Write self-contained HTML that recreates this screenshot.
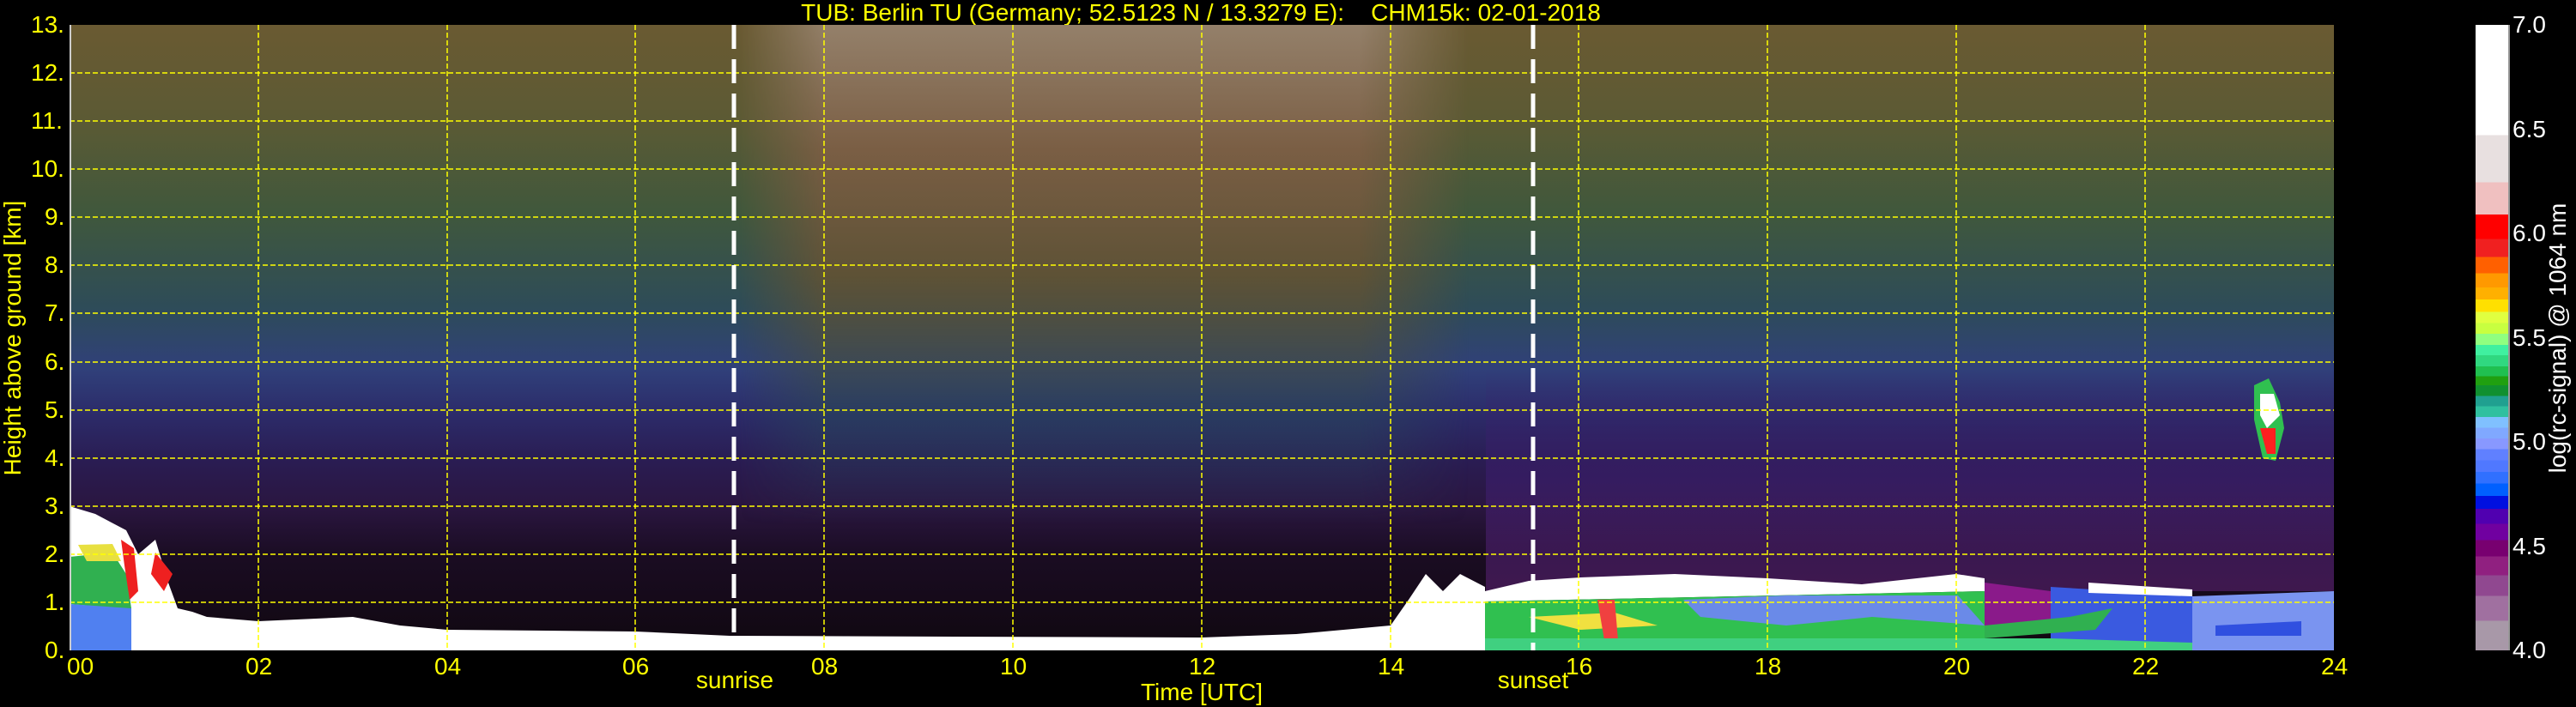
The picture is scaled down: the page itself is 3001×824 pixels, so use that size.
<!DOCTYPE html>
<html><head><meta charset="utf-8"><style>
html,body{margin:0;padding:0;background:#000;width:3001px;height:824px;overflow:hidden;position:relative;font-family:"Liberation Sans","DejaVu Sans",sans-serif;}
.t{position:absolute;color:#ffff00;font-size:28px;white-space:nowrap;line-height:1;}
.w{color:#fff;}
#plot{position:absolute;left:81px;top:29px;width:2638px;height:729px;overflow:hidden;
background:linear-gradient(to bottom,#6a5a32 0%,#5c5a34 15%,#40583c 30%,#2e4c58 45%,#30407a 55%,#2c2c6a 62%,#2a1c52 70%,#2a1640 77%,#1a0c22 85%,#100810 100%);}
#day{position:absolute;left:780px;top:0;width:850px;height:729px;
background:linear-gradient(to bottom,#94806a 0%,#7a5e44 20%,#5e5236 40%,rgba(40,70,90,0.6) 62%,rgba(0,0,0,0) 80%);
-webkit-mask-image:linear-gradient(to right,transparent 0%,#000 12%,#000 85%,transparent 100%);}
#eve{position:absolute;left:1650px;top:400px;width:988px;height:260px;
background:linear-gradient(to bottom,rgba(50,40,120,0) 0%,rgba(60,30,110,0.6) 50%,rgba(80,30,100,0.7) 100%);}
#cb{position:absolute;left:2884px;top:29px;width:38px;height:729px;border-right:2px solid #999;
background:linear-gradient(to bottom,#fff 0%,#fff 17.6%,#e8e0e0 17.6%,#e8e0e0 25.2%,#f0c0c0 25.2%,#f0c0c0 30.3%,#ff0000 30.3%,#ff0000 34.2%,#f02020 34.2%,#f02020 37.1%,#ff6000 37.1%,#ff6000 39.7%,#ff9900 39.7%,#ff9900 42%,#ffb000 42%,#ffb000 43.9%,#ffe000 43.9%,#ffe000 45.9%,#e0ff40 45.9%,#e0ff40 47.7%,#c8ff40 47.7%,#c8ff40 49.4%,#90ff80 49.4%,#90ff80 51.2%,#40f0a0 51.2%,#40f0a0 52.8%,#30d880 52.8%,#30d880 54.6%,#20c050 54.6%,#20c050 56.2%,#20a010 56.2%,#20a010 57.6%,#109030 57.6%,#109030 59.3%,#20a090 59.3%,#20a090 61%,#30c0a0 61%,#30c0a0 62.7%,#80c0ff 62.7%,#80c0ff 64.4%,#80a8ff 64.4%,#80a8ff 66.1%,#8898ff 66.1%,#8898ff 67.8%,#6080ff 67.8%,#6080ff 69.6%,#5078ff 69.6%,#5078ff 71.5%,#3070ff 71.5%,#3070ff 73.3%,#0060ff 73.3%,#0060ff 75.3%,#0010e0 75.3%,#0010e0 77.4%,#5000b0 77.4%,#5000b0 79.8%,#7000a0 79.8%,#7000a0 82.4%,#780070 82.4%,#780070 85%,#902080 85%,#902080 88%,#904890 88%,#904890 91.3%,#a070a0 91.3%,#a070a0 95.3%,#a898a8 95.3%,#a898a8 100%);}
</style></head><body>
<div class="t" style="left:0;width:2798px;text-align:center;top:1px;">TUB: Berlin TU (Germany; 52.5123 N / 13.3279 E):&nbsp;&nbsp;&nbsp; CHM15k: 02-01-2018</div>

<div id="plot">
<div id="day"></div>
<div id="eve"></div>
<svg width="2638" height="729" style="position:absolute;left:0;top:0">
<polygon fill="#fff" points="0,561 30,570 66,589 80,617 100,600 115,650 126,680 143,684 160,690 220,695 330,690 385,700 440,705 659,707 769,712 1319,714 1429,710 1539,700 1649,690 1649,729 0,729"/>
<polygon fill="#30b050" points="0,620 50,615 66,640 72,680 60,680 0,675"/>
<polygon fill="#e8e040" points="10,606 50,605 60,625 20,625"/>
<polygon fill="#ee2020" points="60,600 75,610 80,660 70,670 64,630"/>
<polygon fill="#5080f0" points="0,675 72,680 72,729 0,729"/>
<polygon fill="#ee2020" points="100,615 120,640 110,660 95,640"/>
<polygon fill="#fff" points="1539,700 1560,670 1580,640 1600,660 1620,640 1649,655 1649,729 1539,729"/>
<polygon fill="#fff" points="1649,660 1700,648 1760,644 1870,640 1978,645 2088,652 2198,640 2231,645 2231,660 1649,672"/>
<polygon fill="#30c050" points="1649,672 2231,660 2231,729 1649,729"/>
<polygon fill="#f0e040" points="1700,690 1800,685 1850,700 1760,705"/>
<polygon fill="#f04040" points="1780,670 1800,670 1805,729 1790,729"/>
<polygon fill="#6a8ae8" points="1880,670 2000,665 2200,665 2231,700 2100,690 2000,700 1900,690"/>
<polygon fill="#40d080" points="1649,715 2638,715 2638,729 1649,729"/>
<polygon fill="#8a1a8a" points="2231,650 2308,660 2308,705 2231,710"/>
<polygon fill="#3a5ae0" points="2308,655 2473,665 2473,720 2308,715"/>
<polygon fill="#fff" points="2352,650 2473,658 2473,666 2352,662"/>
<polygon fill="#30b050" points="2231,700 2330,690 2380,680 2360,705 2231,715"/>
<polygon fill="#7a94f0" points="2473,666 2638,660 2638,729 2473,729"/>
<polygon fill="#3050e0" points="2500,700 2600,695 2600,712 2500,712"/>
<polygon fill="#30c050" points="2545,420 2562,412 2575,440 2580,470 2570,508 2555,505 2545,460"/>
<polygon fill="#fff" points="2552,430 2568,430 2575,455 2560,470 2552,455"/>
<polygon fill="#ff2020" points="2552,470 2570,470 2570,500 2560,500"/>
</svg>
<svg width="2638" height="729" style="position:absolute;left:0;top:0">
<g stroke="#ffff00" stroke-width="1.5" stroke-dasharray="6,3" fill="none">
<path d="M0 673H2638M0 617H2638M0 561H2638M0 505H2638M0 449H2638M0 393H2638M0 336H2638M0 280H2638M0 224H2638M0 168H2638M0 112H2638M0 56H2638"/>
<path d="M220 0V729M440 0V729M659 0V729M879 0V729M1099 0V729M1319 0V729M1539 0V729M1758 0V729M1978 0V729M2198 0V729M2418 0V729"/>
</g>
<g stroke="#fff" stroke-width="5" stroke-dasharray="28,12">
<path d="M774 0V729M1705 0V729"/>
</g>
<path d="M1 0V729" stroke="#ccc" stroke-width="2"/>
</svg>
</div>

<div class="t" style="left:36px;top:15px">13.</div>
<div class="t" style="left:36px;top:71px">12.</div>
<div class="t" style="left:36px;top:127px">11.</div>
<div class="t" style="left:36px;top:183px">10.</div>
<div class="t" style="left:52px;top:239px">9.</div>
<div class="t" style="left:52px;top:295px">8.</div>
<div class="t" style="left:52px;top:351px">7.</div>
<div class="t" style="left:52px;top:408px">6.</div>
<div class="t" style="left:52px;top:464px">5.</div>
<div class="t" style="left:52px;top:520px">4.</div>
<div class="t" style="left:52px;top:576px">3.</div>
<div class="t" style="left:52px;top:632px">2.</div>
<div class="t" style="left:52px;top:688px">1.</div>
<div class="t" style="left:52px;top:744px">0.</div>
<div class="t" style="left:15px;top:394px;transform:translate(-50%,-50%) rotate(-90deg);">Height above ground [km]</div>

<div class="t" style="left:78px;top:763px">00</div>
<div class="t" style="left:286px;top:763px">02</div>
<div class="t" style="left:506px;top:763px">04</div>
<div class="t" style="left:725px;top:763px">06</div>
<div class="t" style="left:945px;top:763px">08</div>
<div class="t" style="left:1165px;top:763px">10</div>
<div class="t" style="left:1385px;top:763px">12</div>
<div class="t" style="left:1605px;top:763px">14</div>
<div class="t" style="left:1824px;top:763px">16</div>
<div class="t" style="left:2044px;top:763px">18</div>
<div class="t" style="left:2264px;top:763px">20</div>
<div class="t" style="left:2484px;top:763px">22</div>
<div class="t" style="left:2704px;top:763px">24</div>
<div class="t" style="left:856px;top:779px;transform:translateX(-50%)">sunrise</div>
<div class="t" style="left:1786px;top:779px;transform:translateX(-50%)">sunset</div>
<div class="t" style="left:1400px;top:793px;transform:translateX(-50%)">Time [UTC]</div>

<div id="cb"></div>
<div class="t w" style="left:2927px;top:15px">7.0</div>
<div class="t w" style="left:2927px;top:137px">6.5</div>
<div class="t w" style="left:2927px;top:258px">6.0</div>
<div class="t w" style="left:2927px;top:380px">5.5</div>
<div class="t w" style="left:2927px;top:501px">5.0</div>
<div class="t w" style="left:2927px;top:623px">4.5</div>
<div class="t w" style="left:2927px;top:744px">4.0</div>
<div class="t w" style="left:2980px;top:394px;transform:translate(-50%,-50%) rotate(-90deg);">log(rc-signal) @ 1064 nm</div>
</body></html>
